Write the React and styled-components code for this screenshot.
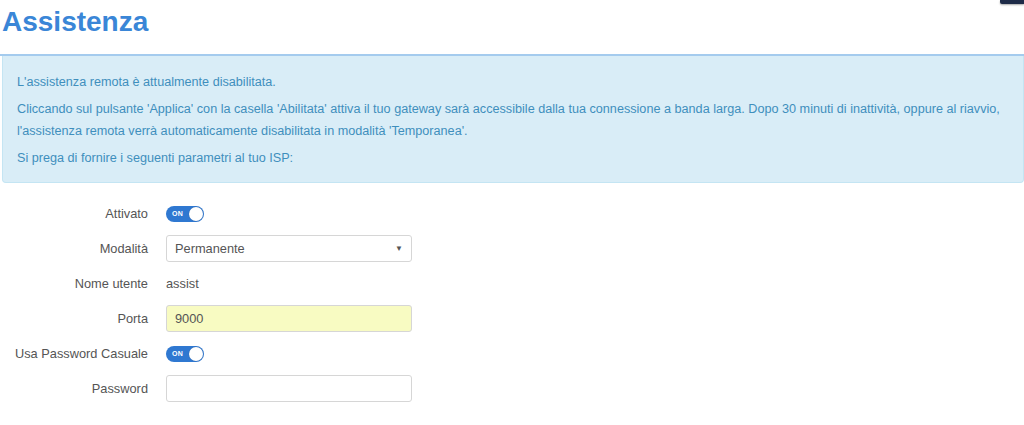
import React from 'react';
import styled, { createGlobalStyle } from 'styled-components';

const GlobalStyle = createGlobalStyle`
  body {
    margin: 0;
    background: #fff;
    font-family: 'Liberation Sans', Arial, sans-serif;
  }
`;

const Page = styled.div`
  position: relative;
  width: 1024px;
  height: 425px;
  overflow: hidden;
`;

const CornerTab = styled.div`
  position: absolute;
  top: 0;
  right: 0;
  width: 24px;
  height: 4px;
  background: #1e2b48;
  box-shadow: 0 1px 2px rgba(0, 0, 0, 0.35);
  border-bottom-left-radius: 2px;
`;

const Header = styled.div`
  height: 54px;
  padding-left: 2px;
  border-bottom: 2px solid #a4cbee;
  box-sizing: content-box;
`;

const Title = styled.h1`
  margin: 0;
  padding-top: 6px;
  font-size: 28px;
  line-height: 32px;
  font-weight: 700;
  color: #3a86d7;
`;

const Alert = styled.div`
  margin-left: 2px;
  padding: 15px 14px 13px;
  background: #d9edf7;
  border: 1px solid #c4e5f3;
  border-top: none;
  border-radius: 0 0 4px 4px;
  color: #3f8fbd;
  font-size: 12.65px;
`;

const AlertText = styled.p`
  margin: 0 0 5px;
  line-height: 22px;
  &:last-child {
    margin-bottom: 0;
  }
`;

const Form = styled.div`
  display: flex;
  flex-direction: column;
  gap: 8px;
  padding-top: 17px;
`;

const Row = styled.div`
  display: grid;
  grid-template-columns: 148px 246px;
  column-gap: 18px;
  align-items: center;
  height: 27px;
`;

const Label = styled.div`
  text-align: right;
  font-size: 12.8px;
  color: #555;
`;

const Value = styled.div`
  font-size: 12.8px;
  color: #555;
`;

const Toggle = styled.div`
  position: relative;
  width: 38px;
  height: 16px;
  border-radius: 8px;
  background: #2f78d1;
  display: flex;
  align-items: center;
  box-sizing: border-box;
`;

const ToggleText = styled.span`
  padding-left: 6px;
  font-size: 7px;
  font-weight: 700;
  color: #fff;
  letter-spacing: 0.2px;
`;

const Knob = styled.span`
  position: absolute;
  right: 1px;
  top: 1px;
  width: 14px;
  height: 14px;
  border-radius: 50%;
  background: #fff;
  box-shadow: 0 0 1px rgba(0, 0, 0, 0.3);
`;

const Field = styled.div`
  height: 27px;
  box-sizing: border-box;
  border: 1px solid #d6d6d6;
  border-radius: 3px;
  background: ${p => (p.$highlight ? '#f8fbc2' : '#fff')};
  padding: 0 8px;
  display: flex;
  align-items: center;
  justify-content: space-between;
  font-size: 12.8px;
  color: #555;
`;

const Caret = styled.span`
  font-size: 8px;
  color: #555;
`;

function Switch() {
  return (
    <Toggle>
      <ToggleText>ON</ToggleText>
      <Knob />
    </Toggle>
  );
}

export default function App() {
  return (
    <Page>
      <GlobalStyle />
      <CornerTab />
      <Header>
        <Title>Assistenza</Title>
      </Header>
      <Alert>
        <AlertText>L'assistenza remota è attualmente disabilitata.</AlertText>
        <AlertText>
          Cliccando sul pulsante 'Applica' con la casella 'Abilitata' attiva il tuo gateway sarà accessibile dalla tua connessione a banda larga. Dopo 30 minuti di inattività, oppure al riavvio, l'assistenza remota verrà automaticamente disabilitata in modalità 'Temporanea'.
        </AlertText>
        <AlertText>Si prega di fornire i seguenti parametri al tuo ISP:</AlertText>
      </Alert>
      <Form>
        <Row>
          <Label>Attivato</Label>
          <Switch />
        </Row>
        <Row>
          <Label>Modalità</Label>
          <Field>
            Permanente
            <Caret>▼</Caret>
          </Field>
        </Row>
        <Row>
          <Label>Nome utente</Label>
          <Value>assist</Value>
        </Row>
        <Row>
          <Label>Porta</Label>
          <Field $highlight>9000</Field>
        </Row>
        <Row>
          <Label>Usa Password Casuale</Label>
          <Switch />
        </Row>
        <Row>
          <Label>Password</Label>
          <Field />
        </Row>
      </Form>
    </Page>
  );
}
